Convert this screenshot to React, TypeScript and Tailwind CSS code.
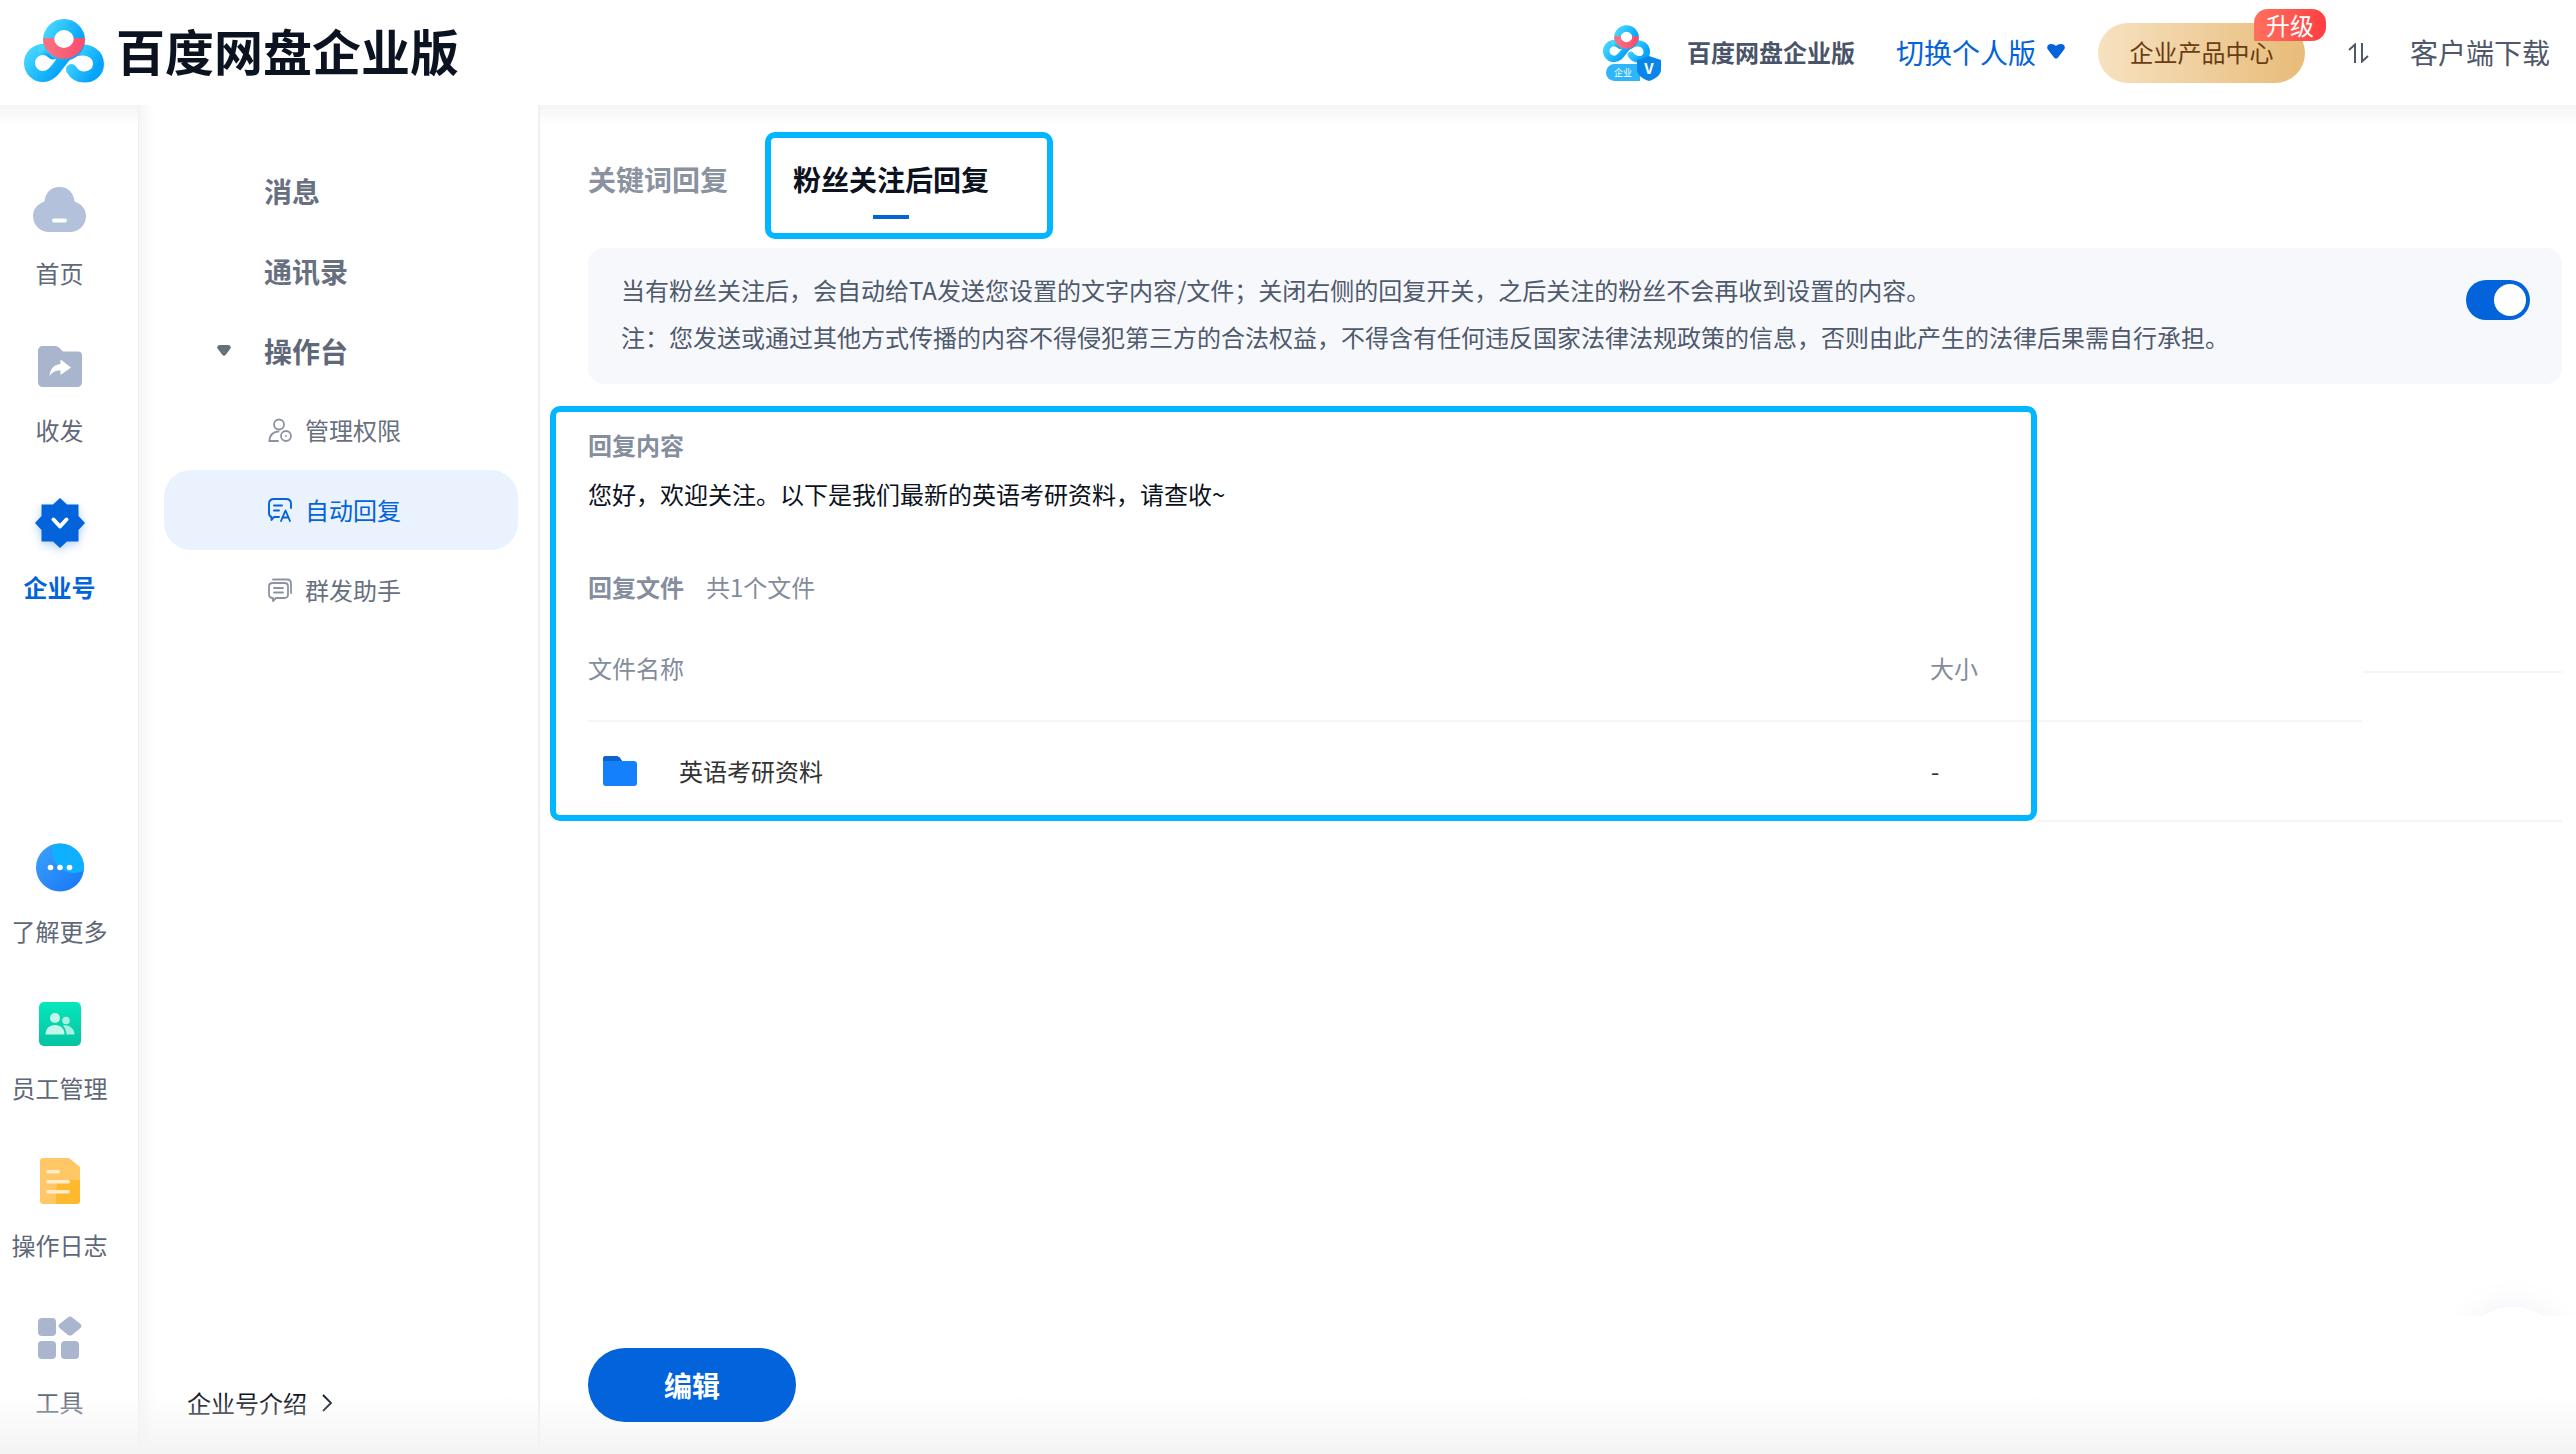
import type { ReactNode } from "react"

const Logo = ({ id, className }: { id: string; className: string }) => (
  <svg viewBox="0 0 80 64" className={className}>
    <defs>
      <linearGradient id={`${id}-blue`} x1="0" y1="0" x2="1" y2="0.6">
        <stop offset="0" stopColor="#45d6ff" />
        <stop offset="1" stopColor="#06a4fb" />
      </linearGradient>
      <linearGradient id={`${id}-red`} x1="0" y1="0" x2="1" y2="0">
        <stop offset="0" stopColor="#f8707f" />
        <stop offset="1" stopColor="#fb4f70" />
      </linearGradient>
    </defs>
    <g fill="none" strokeWidth="11" strokeLinecap="round">
      <path d="M19 30.5A13.5 13.5 0 1 0 19 57.500C29 57.500 33 47 41 38" stroke={`url(#${id}-blue)`} />
      <path d="M19 30.500C23 30.500 26 32 29 35" stroke={`url(#${id}-blue)`} />
      <path d="M54 31.500C66 29 74.500 36 74.500 45C74.500 53 68 58 60.500 58C55 58 50 55 47.500 50.500" stroke={`url(#${id}-blue)`} />
      <circle cx="40" cy="21" r="15.500" stroke={`url(#${id}-blue)`} />
      <path d="M24.500 19A15.500 15.500 0 0 0 55.500 19" stroke={`url(#${id}-red)`} strokeLinecap="butt" />
    </g>
  </svg>
)

const HomeIcon = () => (
  <svg viewBox="0 0 53 45" className="w-[53px] h-[45px]">
    <path d="M26.500 0C35 0 41 6 41.500 14.500C48 16.500 53 22 53 29C53 38 46 45 37 45H16C7 45 0 38 0 29C0 22 5 16.500 11.500 14.500C12 6 18 0 26.500 0Z" fill="#b3c1da" />
    <rect x="19" y="31.500" width="15" height="4" rx="2" fill="#fff" />
  </svg>
)

const ShareIcon = () => (
  <svg viewBox="0 0 44 41" className="w-[44px] h-[41px]">
    <path d="M5 0H17C19 0 20.500 1 22 2.500L25 5.500H40C42.500 5.500 44 7 44 9.500V36C44 39 42 41 39 41H5C2 41 0 39 0 36V5C0 2 2 0 5 0Z" fill="#a9b5cc" />
    <path d="M22.500 13.500L33 21.500L22.500 29V24.500C17 24.500 14 26.500 11.500 30C12 23.500 15.500 18.500 22.500 18Z" fill="#fff" />
  </svg>
)

const BizIcon = () => (
  <svg viewBox="0 0 50 50" className="w-[50px] h-[50px] drop-shadow-[0_3px_4px_rgba(2,99,218,0.3)]">
    <path d="M25 0L32 6.500H43.500V18L50 25L43.500 32V43.500H32L25 50L18 43.500H6.500V32L0 25L6.500 18V6.500H18Z" fill="#0263da" />
    <path d="M18.500 21.500L25 28.500L31.500 21.500" fill="none" stroke="#fff" strokeWidth="4" strokeLinecap="round" strokeLinejoin="round" />
  </svg>
)

const MoreIcon = () => (
  <svg viewBox="0 0 48 49" className="w-[48px] h-[49px]">
    <defs>
      <linearGradient id="more" x1="0" y1="0" x2="1" y2="1">
        <stop offset="0" stopColor="#3ea2fb" />
        <stop offset="1" stopColor="#1576f6" />
      </linearGradient>
      <clipPath id="more-clip">
        <circle cx="24" cy="24.500" r="24" />
      </clipPath>
    </defs>
    <circle cx="24" cy="24.500" r="24" fill="url(#more)" />
    <g clipPath="url(#more-clip)">
      <circle cx="38" cy="8" r="22" fill="#0fb0ff" />
    </g>
    <circle cx="14.500" cy="24.500" r="2.800" fill="#fff" />
    <circle cx="24" cy="24.500" r="2.800" fill="#fff" />
    <circle cx="33.500" cy="24.500" r="2.800" fill="#fff" />
  </svg>
)

const StaffIcon = () => (
  <svg viewBox="0 0 42 44" className="w-[42px] h-[44px]">
    <defs>
      <linearGradient id="staff" x1="0" y1="0" x2="0" y2="1">
        <stop offset="0" stopColor="#07e7bd" />
        <stop offset="1" stopColor="#04c3a0" />
      </linearGradient>
    </defs>
    <rect width="42" height="44" rx="5" fill="url(#staff)" />
    <circle cx="16" cy="16" r="5" fill="#c3f5ea" />
    <circle cx="27" cy="18.500" r="3.800" fill="#a9efe0" />
    <path d="M6.500 32.500C6.500 26.500 10.500 23 16 23C21.500 23 25.500 26.500 25.500 32.500Z" fill="#c3f5ea" />
    <path d="M24 23.500C29.500 22.500 35.500 26 35.500 32.500H27.500C27.500 29 26 26 24 23.500Z" fill="#a9efe0" />
  </svg>
)

const LogIcon = () => (
  <svg viewBox="0 0 40 46" className="w-[40px] h-[46px]">
    <path d="M3 0H29L40 9V43C40 45 38.500 46 37 46H3C1.500 46 0 45 0 43V3C0 1 1.500 0 3 0Z" fill="#ffc765" />
    <path d="M40 22V43C40 45 38.500 46 37 46H16V32C16 28 18 22 24 22Z" fill="#ffb92e" />
    <rect x="6" y="12" width="14" height="3.500" rx="1.700" fill="#ffeccb" />
    <rect x="6" y="22" width="24" height="3.500" rx="1.700" fill="#ffeccb" />
    <rect x="6" y="32" width="24" height="3.500" rx="1.700" fill="#ffeccb" />
  </svg>
)

const ToolIcon = () => (
  <svg viewBox="0 0 44 44" className="w-[44px] h-[44px]">
    <rect y="2" width="18" height="18" rx="4" fill="#a9b6cd" />
    <rect y="25" width="18" height="18" rx="4" fill="#a9b6cd" />
    <rect x="23" y="25" width="18" height="18" rx="4" fill="#a9b6cd" />
    <path d="M30 1.200C31.200 0.400 32.800 0.400 34 1.200L42.500 8C43.800 9 43.800 11 42.500 12L34 19C32.800 19.800 31.200 19.800 30 19L21.500 12C20.200 11 20.200 9 21.500 8Z" fill="#a9b6cd" />
  </svg>
)

const railTop = [
  { label: "首页", icon: <HomeIcon /> },
  { label: "收发", icon: <ShareIcon /> },
  { label: "企业号", icon: <BizIcon />, active: true },
]

const railBottom = [
  { label: "了解更多", icon: <MoreIcon /> },
  { label: "员工管理", icon: <StaffIcon /> },
  { label: "操作日志", icon: <LogIcon /> },
  { label: "工具", icon: <ToolIcon /> },
]

const RailItem = ({ label, icon, active }: { label: string; icon: ReactNode; active?: boolean }) => (
  <div className="flex flex-col items-center h-[157px] shrink-0">
    <div className="flex items-center justify-center h-[78px]">{icon}</div>
    <span className={`mt-[9px] text-[24px] leading-[32px] ${active ? "font-semibold text-[#0263da]" : "text-[#5f6878]"}`}>{label}</span>
  </div>
)

const PermIcon = () => (
  <svg viewBox="0 0 24 24" className="w-[24px] h-[24px]" fill="none" stroke="#8b93a3" strokeWidth="1.800">
    <circle cx="11" cy="6.500" r="5" />
    <path d="M1.500 23C1.500 17 5.500 13.500 10.500 13.500" strokeLinecap="round" />
    <path d="M1.500 23H10" strokeLinecap="round" />
    <circle cx="18" cy="18" r="5" />
    <circle cx="18" cy="18" r="1" fill="#8b93a3" stroke="none" />
  </svg>
)

const ReplyIcon = () => (
  <svg viewBox="0 0 24 24" className="w-[24px] h-[24px]" fill="none" stroke="#0263da" strokeWidth="1.900" strokeLinejoin="round" strokeLinecap="round">
    <path d="M11 19H6L3.500 22V19C2 18.500 1 17 1 15V6C1 3 3 1 6 1H18C21 1 23 3 23 6V10" />
    <path d="M6 7.500H14M6 12.500H11" />
    <path d="M13 23L17.500 12.500L22 23M14.500 19.500H20.500" />
  </svg>
)

const GroupIcon = () => (
  <svg viewBox="0 0 24 24" className="w-[24px] h-[24px]" fill="none" stroke="#8b93a3" strokeWidth="1.800" strokeLinejoin="round" strokeLinecap="round">
    <path d="M5 1.500H19C21.500 1.500 23 3 23 5.500V15" />
    <path d="M4.500 5H16.500C18.500 5 20 6.500 20 8.500V16.500C20 18.500 18.500 20 16.500 20H8L5 23V20H4.500C2.500 20 1 18.500 1 16.500V8.500C1 6.500 2.500 5 4.500 5Z" />
    <path d="M6 10H15M6 14.500H15" />
  </svg>
)

const subNav = [
  { label: "管理权限", icon: <PermIcon /> },
  { label: "自动回复", icon: <ReplyIcon />, active: true },
  { label: "群发助手", icon: <GroupIcon /> },
]

const App = () => {
  return (
    <div className="relative h-[1454px] w-[2576px] overflow-hidden bg-white font-['Noto_Sans_CJK_SC','Liberation_Sans',sans-serif]">
      <header className="flex items-center h-[105px] pl-[24px] pr-[26px]">
        <Logo id="main" className="w-[80px] h-[64px] mt-[-3px]" />
        <span className="ml-[12px] mt-[-6px] text-[49px] leading-[64px] font-semibold text-[#0b1220]">百度网盘企业版</span>
        <div className="relative ml-auto mr-[26px] w-[58px] h-[56px]">
          <Logo id="small" className="w-[47px] h-[38px]" />
          <div className="absolute left-[3px] bottom-0 flex items-center justify-center w-[34px] h-[17px] rounded-l-full rounded-r-[6px] bg-[#2fb5fa] text-[9px] leading-none text-white">企业</div>
          <svg viewBox="0 0 24 25" className="absolute right-0 bottom-0 w-[24px] h-[25px]">
            <path d="M12 0L24 4V14C24 19 18 23 12 25C6 23 0 19 0 14V4Z" fill="#0a86ea" />
            <text x="12" y="18" textAnchor="middle" fontSize="15" fontWeight="700" fill="#fff">V</text>
          </svg>
        </div>
        <span className="mt-[-2px] text-[24px] leading-[32px] font-semibold text-[#4a5468]">百度网盘企业版</span>
        <span className="ml-[41px] mt-[-2px] text-[28px] leading-[36px] text-[#0263da]">切换个人版</span>
        <svg viewBox="0 0 18 15" className="ml-[11px] mt-[-2px] w-[18px] h-[15px]">
          <path d="M4 0C6 0 8 0.800 9 2C10 0.800 12 0 14 0C17 0 18.500 2.500 17.500 5L11 13.500C10 15 8 15 7 13.500L0.500 5C-0.500 2.500 1 0 4 0Z" fill="#0263da" />
        </svg>
        <div className="relative ml-[33px] flex items-center justify-center w-[207px] h-[60px] pb-[2px] rounded-full bg-linear-to-r from-[#f6e2c0] to-[#e8bb78] text-[24px] text-[#6a3d14]">
          企业产品中心
          <span className="absolute left-[156px] top-[-14px] flex items-center justify-center w-[72px] h-[32px] rounded-t-[14px] rounded-br-[14px] bg-linear-to-r from-[#ff6f5e] to-[#ff3d42] text-[24px] leading-none text-white">升级</span>
        </div>
        <svg viewBox="0 0 24 20" className="ml-[42px] w-[24px] h-[20px]" fill="none" stroke="#4f586a" strokeWidth="2">
          <path d="M8 20V1.500L2 7" />
          <path d="M15 0V18.500L21 13" />
        </svg>
        <span className="ml-[39px] mt-[-2px] text-[28px] leading-[36px] text-[#4f586a]">客户端下载</span>
      </header>

      <div className="relative flex h-[1349px]">
        <div className="absolute left-0 right-0 top-0 h-[20px] bg-linear-to-b from-[#f5f5f5] to-white" />

        <aside className="relative w-[139px] shrink-0 pt-[65px] pr-[19px] border-r border-[#f0f0f0]">
          {railTop.map((item) => (
            <RailItem key={item.label} {...item} />
          ))}
          <div className="h-[187px]" />
          {railBottom.map((item) => (
            <RailItem key={item.label} {...item} />
          ))}
        </aside>

        <nav className="relative flex flex-col w-[401px] shrink-0 border-r-2 border-[#f0f0f0] pt-[46px] bg-linear-to-r from-[#f6f6f6] to-white to-[16px]">
          {["消息", "通讯录"].map((label) => (
            <div key={label} className="flex items-center h-[80px] pl-[125px] text-[28px] font-semibold text-[#687080]">{label}</div>
          ))}
          <div className="flex items-center h-[79px] pl-[125px] text-[28px] font-semibold text-[#5f6878]">
            <svg viewBox="0 0 14 11" className="absolute left-[78px] w-[14px] h-[11px]">
              <path d="M3 0H11C13.500 0 14.500 2 13.300 3.800L8.800 9.800C7.800 11.200 6.200 11.200 5.200 9.800L0.700 3.800C-0.500 2 0.500 0 3 0Z" fill="#687080" />
            </svg>
            操作台
          </div>
          {subNav.map((item) => (
            <div
              key={item.label}
              className={`flex items-center h-[80px] ml-[25px] mr-[20px] pl-[104px] rounded-[27px] text-[24px] ${item.active ? "bg-[#eaf3fd] text-[#0263da]" : "text-[#687080]"}`}
            >
              {item.icon}
              <span className="ml-[13px]">{item.label}</span>
            </div>
          ))}
          <div className="flex items-center mt-auto mb-[35px] ml-[48px] text-[24px] leading-[32px] text-[#0b1220]">
            企业号介绍
            <svg viewBox="0 0 12 20" className="ml-[14px] w-[12px] h-[20px]" fill="none" stroke="#0b1220" strokeWidth="1.800">
              <path d="M2 2L10 10L2 18" />
            </svg>
          </div>
        </nav>

        <main className="relative flex flex-col flex-1 pl-[48px] pr-[14px] pt-[27px]">
          <div className="flex h-[107px]">
            <span className="mt-[29px] mr-[37px] text-[28px] leading-[36px] font-semibold text-[#8a92a0]">关键词回复</span>
            <div className="w-[288px] h-[107px] pl-[22px] pt-[23px] rounded-[10px] border-[6px] border-[#00b7ff]">
              <div className="flex flex-col items-center w-fit">
                <span className="text-[28px] leading-[36px] font-semibold text-[#0b1220]">粉丝关注后回复</span>
                <span className="mt-[18px] w-[36px] h-[4px] bg-[#0263da]" />
              </div>
            </div>
          </div>

          <div className="flex justify-between mt-[9px] h-[136px] pl-[33px] pr-[32px] pt-[18px] rounded-[16px] bg-[#f7f8fc] text-[24px] leading-[47px] text-[#505a6d]">
            <div>
              <p>当有粉丝关注后，会自动给TA发送您设置的文字内容/文件；关闭右侧的回复开关，之后关注的粉丝不会再收到设置的内容。</p>
              <p>注：您发送或通过其他方式传播的内容不得侵犯第三方的合法权益，不得含有任何违反国家法律法规政策的信息，否则由此产生的法律后果需自行承担。</p>
            </div>
            <div className="flex justify-end items-center mt-[14px] pr-[4px] w-[64px] h-[40px] rounded-full bg-[#0263da]">
              <span className="w-[32px] h-[32px] rounded-full bg-white" />
            </div>
          </div>

          <div className="relative mt-[22px] ml-[-38px] w-[1487px] h-[415px] rounded-[10px] border-[6px] border-[#00b7ff] pl-[32px] pt-[17px] text-[24px] leading-[32px]">
            <p className="font-semibold text-[#858e9e]">回复内容</p>
            <p className="mt-[17px] text-[#0b1220]">您好，欢迎关注。以下是我们最新的英语考研资料，请查收~</p>
            <div className="mt-[61px] flex">
              <span className="font-semibold text-[#858e9e]">回复文件</span>
              <span className="ml-[22px] text-[#838c9c]">共1个文件</span>
            </div>
            <div className="mt-[49px] pb-[35px] grid grid-cols-[1342px_1fr] text-[#838c9c]">
              <span>文件名称</span>
              <span>大小</span>
            </div>
            <div className="mt-[36px] grid grid-cols-[1343px_1fr] text-[#333333]">
              <div className="flex items-center">
                <svg viewBox="0 0 34 30" className="ml-[15px] w-[34px] h-[30px]">
                  <path d="M3 0H13C15 0 16 1 17 2L19 5H31C33 5 34 6.500 34 8V27C34 29 33 30 31 30H3C1 30 0 29 0 27V3C0 1 1 0 3 0Z" fill="#1580fb" />
                  <path d="M3 0H13C15 0 16 1 17 2L19 5H0V3C0 1 1 0 3 0Z" fill="#0c63d0" />
                </svg>
                <span className="ml-[42px]">英语考研资料</span>
              </div>
              <span>-</span>
            </div>
            <div className="absolute left-[32px] right-0 top-[308px] h-[2px] bg-[#f5f5f5]" />
            <div className="absolute left-[1481px] w-[325px] top-[308px] h-[2px] bg-[#f5f5f5]" />
            <div className="absolute left-[1806px] w-[200px] top-[259px] h-[2px] bg-[#f5f5f5]" />
            <div className="absolute left-[1481px] w-[525px] top-[408px] h-[2px] bg-[#f5f5f5]" />
          </div>

          <button className="relative z-10 mt-auto mb-[32px] w-[208px] h-[74px] rounded-full bg-[#0263da] text-[28px] font-bold text-white">编辑</button>
        </main>
      </div>

      <div className="absolute right-0 bottom-[138px] w-[150px] h-[90px] overflow-hidden">
        <div className="absolute left-[33px] top-[81px] w-[108px] h-[108px] rounded-full bg-white shadow-[0_0_30px_rgba(120,130,170,0.12)]" />
      </div>
      <div className="absolute inset-x-0 bottom-0 h-[60px] bg-linear-to-b from-white/0 to-[#f4f4f4]" />
    </div>
  )
}

export default App
